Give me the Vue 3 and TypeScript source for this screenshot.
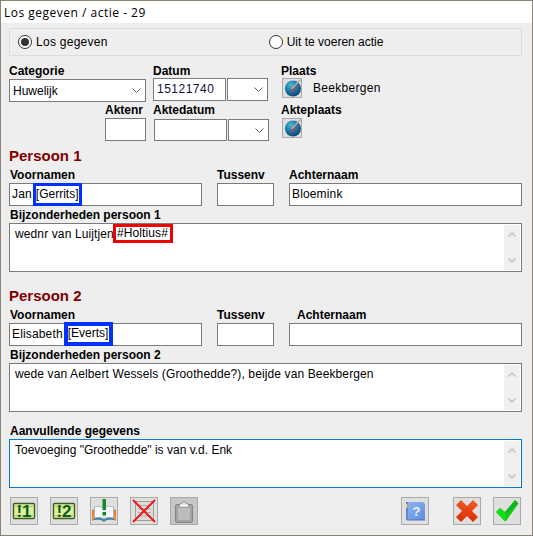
<script setup lang="ts">
interface Person {
  title: string
  first: string
  tag: string
  last: string
  labelShift: boolean
  wide: boolean
  note: string
  mark: string
}

const persons: Person[] = [
  {
    title: 'Persoon 1',
    first: 'Jan',
    tag: '[Gerrits]',
    last: 'Bloemink',
    labelShift: false,
    wide: false,
    note: 'wednr van Luijtjen',
    mark: '#Holtius#',
  },
  {
    title: 'Persoon 2',
    first: 'Elisabeth',
    tag: '[Everts]',
    last: '',
    labelShift: true,
    wide: true,
    note: 'wede van Aelbert Wessels (Groothedde?), beijde van Beekbergen',
    mark: '',
  },
]
</script>

<template>
  <div class="window">
    <div class="titlebar">Los gegeven / actie - 29</div>

    <div class="client">
      <div class="choice">
        <span class="radio-item">
          <span class="radio is-on"></span>
          <span>Los gegeven</span>
        </span>
        <span class="radio-item second">
          <span class="radio"></span>
          <span>Uit te voeren actie</span>
        </span>
      </div>

      <div class="top-row first-row">
        <div class="col cat">
          <label class="lbl">Categorie</label>
          <div class="box combo cat-box">
            <span>Huwelijk</span>
            <svg class="chev" width="9" height="5" viewBox="0 0 9 5"><path d="M.5.5l4 4 4-4" fill="none" stroke="#606060" /></svg>
          </div>
        </div>
        <div class="col date">
          <label class="lbl">Datum</label>
          <div class="date-pair">
            <div class="box date-box num">15121740</div>
            <div class="box combo drop">
              <svg class="chev" width="9" height="5" viewBox="0 0 9 5"><path d="M.5.5l4 4 4-4" fill="none" stroke="#606060" /></svg>
            </div>
          </div>
        </div>
        <div class="col place">
          <label class="lbl">Plaats</label>
          <div class="place-line">
            <button class="pick">
              <svg width="18" height="18" viewBox="0 0 18 18">
                <defs>
                  <radialGradient id="ball" cx="0.38" cy="0.3" r="0.8">
                    <stop offset="0" stop-color="#5ab8d4" />
                    <stop offset="0.4" stop-color="#1a84ae" />
                    <stop offset="1" stop-color="#0a3a6c" />
                  </radialGradient>
                </defs>
                <circle cx="10" cy="9.500" r="8" fill="url(#ball)" />
                <path d="M9 10L17.500 .5" stroke="#b4b4b4" stroke-width="1.600" />
                <path d="M6.500 14.500L15 4l-4.500 8z" fill="#e8202a" />
              </svg>
            </button>
            <span class="place-name">Beekbergen</span>
          </div>
        </div>
      </div>

      <div class="top-row second-row">
        <div class="col nr">
          <label class="lbl">Aktenr</label>
          <div class="box nr-box"></div>
        </div>
        <div class="col date lower">
          <label class="lbl">Aktedatum</label>
          <div class="date-pair">
            <div class="box date-box low"></div>
            <div class="box combo drop low">
              <svg class="chev" width="9" height="5" viewBox="0 0 9 5"><path d="M.5.5l4 4 4-4" fill="none" stroke="#606060" /></svg>
            </div>
          </div>
        </div>
        <div class="col place">
          <label class="lbl">Akteplaats</label>
          <div class="place-line">
            <button class="pick">
              <svg width="18" height="18" viewBox="0 0 18 18">
                <circle cx="10" cy="9.500" r="8" fill="url(#ball)" />
                <path d="M9 10L17.500 .5" stroke="#b4b4b4" stroke-width="1.600" />
                <path d="M6.500 14.500L15 4l-4.500 8z" fill="#e8202a" />
              </svg>
            </button>
          </div>
        </div>
      </div>

      <section v-for="p in persons" :key="p.title" class="person">
        <h2 class="person-title">{{ p.title }}</h2>
        <div class="name-grid">
          <label class="lbl indent">Voornamen</label>
          <label class="lbl">Tussenv</label>
          <label class="lbl" :class="{ shifted: p.labelShift }">Achternaam</label>
          <div class="box name-box">
            <span>{{ p.first }}</span>
            <span class="tag" :class="{ wide: p.wide }">{{ p.tag }}</span>
          </div>
          <div class="box name-box"></div>
          <div class="box name-box">{{ p.last }}</div>
        </div>
        <label class="lbl indent note-lbl">Bijzonderheden {{ p.title.toLowerCase() }}</label>
        <div class="box memo">
          <div class="memo-text">
            {{ p.note }}<span v-if="p.mark" class="mark">{{ p.mark }}</span>
          </div>
          <div class="scroll">
            <svg width="8" height="5" viewBox="0 0 8 5"><path d="M.5 4.500L4 1l3.500 3.500" fill="none" stroke="#bfbfbf" stroke-width="1.400" /></svg>
            <svg width="8" height="5" viewBox="0 0 8 5"><path d="M.5.500L4 4 7.500.5" fill="none" stroke="#bfbfbf" stroke-width="1.400" /></svg>
          </div>
        </div>
      </section>

      <label class="lbl indent extra-lbl">Aanvullende gegevens</label>
      <div class="box memo focused">
        <div class="memo-text">Toevoeging "Groothedde" is van v.d. Enk</div>
        <div class="scroll">
          <svg width="8" height="5" viewBox="0 0 8 5"><path d="M.5 4.500L4 1l3.500 3.500" fill="none" stroke="#bfbfbf" stroke-width="1.400" /></svg>
          <svg width="8" height="5" viewBox="0 0 8 5"><path d="M.5.500L4 4 7.500.5" fill="none" stroke="#bfbfbf" stroke-width="1.400" /></svg>
        </div>
      </div>

      <div class="toolbar">
        <button class="tool">
          <svg width="24" height="24" viewBox="0 0 24 24">
            <rect x="1.500" y="4.500" width="21" height="15" rx="1" fill="#dff09c" stroke="#3c5c24" stroke-width="1.400" />
            <path d="M3 7.500h18M3 16.500h18" stroke="#a8c070" />
            <text x="12" y="18" text-anchor="middle" class="sheet-text">!1</text>
          </svg>
        </button>
        <button class="tool">
          <svg width="24" height="24" viewBox="0 0 24 24">
            <rect x="1.500" y="4.500" width="21" height="15" rx="1" fill="#dff09c" stroke="#3c5c24" stroke-width="1.400" />
            <path d="M3 7.500h18M3 16.500h18" stroke="#a8c070" />
            <text x="12" y="18" text-anchor="middle" class="sheet-text">!2</text>
          </svg>
        </button>
        <button class="tool">
          <svg width="26" height="26" viewBox="0 0 26 26">
            <path d="M1 12c4-2 8-2 12 1 4-3 8-3 12-1v11c-4-2-8-2-12 1-4-3-8-3-12-1z" fill="#e8833a" />
            <path d="M3 21.500c4-1.500 7-1 10 1 3-2 6-2.500 10-1" fill="none" stroke="#2a8ac0" stroke-width="1.800" />
            <path d="M3.500 9c3-1 7-1 9.500 2 2.500-3 6.500-3 9.500-2v11c-3-1-7-1-9.500 1-2.500-2-6.500-2-9.500-1z" fill="#f8fbfd" stroke="#8fb0c0" stroke-width=".8" />
            <path d="M13 11v10" stroke="#a8c4d0" stroke-width=".8" />
            <rect x="11.500" y="1" width="3.500" height="11" fill="#148a2c" />
            <rect x="11.500" y="14" width="3.500" height="3.500" fill="#148a2c" />
          </svg>
        </button>
        <button class="tool">
          <svg width="26" height="26" viewBox="0 0 26 26">
            <rect x="4.500" y="3.500" width="18" height="19" fill="#dcdcdc" stroke="#9c9c9c" />
            <path d="M7 7.500h13M7 11h13M7 14.500h13M7 18h13" stroke="#aaaaaa" />
            <path d="M2 2l22 22M24 2L2 24" stroke="#f01818" stroke-width="2" />
          </svg>
        </button>
        <button class="tool disabled">
          <svg width="24" height="26" viewBox="0 0 24 26">
            <rect x="3.500" y="6.500" width="17" height="18" rx="1.500" fill="#a4a4a4" stroke="#858585" />
            <rect x="6" y="9" width="12" height="13" fill="#bdbdbd" />
            <path d="M7.500 9.500V6l3-1a1.500 1.500 0 0 1 3 0l3 1v3.500z" fill="#e8e8e8" stroke="#8c8c8c" stroke-width=".8" />
          </svg>
        </button>

        <button class="tool help">
          <svg width="24" height="24" viewBox="0 0 24 24">
            <defs>
              <linearGradient id="bluebook" x1="0" y1="0" x2="1" y2="1">
                <stop offset="0" stop-color="#8fb6f2" />
                <stop offset="1" stop-color="#5f8ede" />
              </linearGradient>
            </defs>
            <path d="M3 3h17l2 2v16H4l-1-1z" fill="url(#bluebook)" />
            <path d="M3 3h2v18H4l-1-1z" fill="#5c88cc" />
            <path d="M3 5h1.500v4H3z" fill="#e8c860" />
            <path d="M4 20.500h18v1H4z" fill="#4a74b4" />
            <text x="13.500" y="16.500" text-anchor="middle" class="help-text">?</text>
          </svg>
        </button>
        <button class="tool cancel">
          <svg width="24" height="24" viewBox="0 0 24 24">
            <defs>
              <linearGradient id="redx" x1="0" y1="0" x2="0" y2="1">
                <stop offset="0" stop-color="#ee5a28" />
                <stop offset="1" stop-color="#dc2c00" />
              </linearGradient>
            </defs>
            <path d="M1 6l5-5 6 6 6-6 5 5-6 6 6 6-5 5-6-6-6 6-5-5 6-6z" fill="url(#redx)" />
          </svg>
        </button>
        <button class="tool ok">
          <svg width="24" height="24" viewBox="0 0 24 24">
            <path d="M1 13l4-4 5 4L20 1l3.500 3.500L11 22h-1.500z" fill="#10d010" />
            <path d="M10 13L20 1l3.500 3.500L11 15z" fill="#0aa02a" opacity=".55" />
            <path d="M1 13l4-4 5 4 1 2-1.500 7z" fill="#18dc18" />
          </svg>
        </button>
      </div>
    </div>
  </div>
</template>

<style>
html,
body {
  margin: 0;
  background: #eeeeee;
}
</style>

<style scoped>
.window {
  width: 533px;
  height: 536px;
  box-sizing: border-box;
  border: 1px solid #8a8272;
  background: #eeeeee;
  font-family: "Liberation Sans", Arial, sans-serif;
  font-size: 12px;
  color: #000;
  overflow: hidden;
}
.titlebar {
  height: 22px;
  line-height: 24px;
  padding-left: 3px;
  background: #fff;
  font-family: "Open Sans", sans-serif;
  font-size: 12px;
  letter-spacing: 0.5px;
  color: #000;
}
.client {
  padding: 5px 10px 0 8px;
}
.choice {
  display: flex;
  height: 28px;
  box-sizing: border-box;
  border: 1px solid #dcdcdc;
  align-items: center;
  padding-left: 8px;
}
.radio-item {
  display: flex;
  align-items: center;
  gap: 4px;
  letter-spacing: 0.27px;
}
.radio-item.second {
  margin-left: 161px;
  letter-spacing: 0;
}
.radio {
  width: 14px;
  height: 14px;
  box-sizing: border-box;
  border: 1px solid #333;
  border-radius: 50%;
  background: #fff;
  display: flex;
  align-items: center;
  justify-content: center;
}
.radio.is-on::after {
  content: "";
  width: 8px;
  height: 8px;
  border-radius: 50%;
  background: #333;
}
.lbl {
  display: block;
  height: 15px;
  line-height: 15px;
  font-weight: 700;
  white-space: nowrap;
}
.first-row .lbl,
.name-grid .lbl {
  line-height: 17px;
}
.top-row {
  display: flex;
  margin-top: 7px;
}
.second-row {
  margin-top: 1px;
  padding-left: 96px;
}
.col {
  display: flex;
  flex-direction: column;
}
.cat {
  width: 137px;
  margin-right: 7px;
}
.date {
  width: 115px;
  margin-right: 13px;
}
.place {
  width: 100px;
}
.nr {
  width: 41px;
  margin-right: 7px;
}
.box {
  box-sizing: border-box;
  border: 1px solid #7a7a7a;
  background: #fff;
  flex: none;
}
.combo {
  display: flex;
  align-items: center;
  justify-content: space-between;
  padding-left: 2px;
}
.cat-box {
  height: 23px;
  margin-top: 1px;
  padding-left: 3px;
}
.chev {
  margin-left: auto;
  margin-right: 4px;
}
.date-pair {
  display: flex;
  gap: 1px;
}
.date-box {
  width: 73px;
  height: 23px;
}
.num {
  line-height: 20px;
  padding-left: 3px;
  color: #101040;
  letter-spacing: 0.5px;
}
.drop {
  width: 41px;
  height: 23px;
}
.low {
  height: 22px;
  margin-top: 1px;
}
.lower .date-pair {
  margin-left: 1px;
}
.nr-box {
  width: 41px;
  height: 23px;
}
.place-line {
  display: flex;
  align-items: center;
}
.pick {
  width: 20px;
  height: 20px;
  margin-left: 1px;
  padding: 0;
  box-sizing: border-box;
  border: 1px solid #aaaaaa;
  background: #dfdfdf;
  display: flex;
  align-items: center;
  justify-content: center;
}
.place-name {
  margin-left: 11px;
  letter-spacing: 0.3px;
}
.person {
  margin-bottom: 15px;
}
.top-row + .person {
  margin-top: 6px;
}
.person-title {
  margin: 0;
  height: 18px;
  line-height: 18px;
  font-size: 15px;
  font-weight: 700;
  color: #800000;
}
.name-grid {
  display: grid;
  grid-template-columns: 193px 57px 233px;
  column-gap: 15px;
  margin-top: 2px;
}
.name-grid .lbl {
  margin-bottom: 1px;
}
.indent {
  padding-left: 1px;
}
.shifted {
  padding-left: 8px;
}
.name-box {
  height: 23px;
  line-height: 21px;
  padding-left: 2px;
  white-space: nowrap;
  letter-spacing: 0.15px;
}
.tag {
  display: inline-block;
  height: 17px;
  line-height: 16px;
  margin-left: 4px;
  padding-right: 1px;
  vertical-align: top;
  margin-top: 2px;
  letter-spacing: 0;
  outline: 3px solid #0032ff;
}
.tag.wide {
  height: 16px;
  line-height: 15px;
  outline-width: 4px;
  margin-left: 5px;
  margin-top: 2px;
}
.note-lbl {
  margin-top: 2px;
}
.memo {
  display: flex;
  width: 513px;
  height: 49px;
  justify-content: space-between;
}
.memo-text {
  padding: 2px 0 0 5px;
  line-height: 16px;
  letter-spacing: 0.12px;
  white-space: nowrap;
}
.mark {
  display: inline-block;
  height: 13px;
  line-height: 13px;
  margin-left: 2px;
  padding: 0 2px 0 1px;
  outline: 3px solid #f00000;
  vertical-align: top;
  margin-top: 1px;
}
.scroll {
  width: 16px;
  margin: 1px;
  background: #f0f0f0;
  display: flex;
  flex-direction: column;
  align-items: center;
  justify-content: space-between;
  padding: 7px 0;
  box-sizing: border-box;
}
.extra-lbl {
  margin-top: -3px;
}
.focused {
  border-color: #0078d7;
}
.focused .memo-text {
  letter-spacing: 0;
}
.toolbar {
  display: flex;
  margin-top: 9px;
  padding-left: 1px;
  width: 512px;
  gap: 12px;
}
.tool {
  width: 28px;
  height: 28px;
  padding: 0;
  box-sizing: border-box;
  border: 1px solid #aaaaaa;
  background: #dfdfdf;
  display: flex;
  align-items: center;
  justify-content: center;
}
.tool.disabled {
  background: #c6c6c6;
}
.tool.help {
  margin-left: 191px;
}
.tool.cancel {
  margin-left: 12px;
}
.sheet-text {
  font-family: "Liberation Sans", Arial, sans-serif;
  font-size: 17px;
  font-weight: 700;
  fill: #0a5c20;
}
.help-text {
  font-family: "Liberation Sans", Arial, sans-serif;
  font-size: 13px;
  font-weight: 700;
  fill: #eef3ff;
}
</style>
